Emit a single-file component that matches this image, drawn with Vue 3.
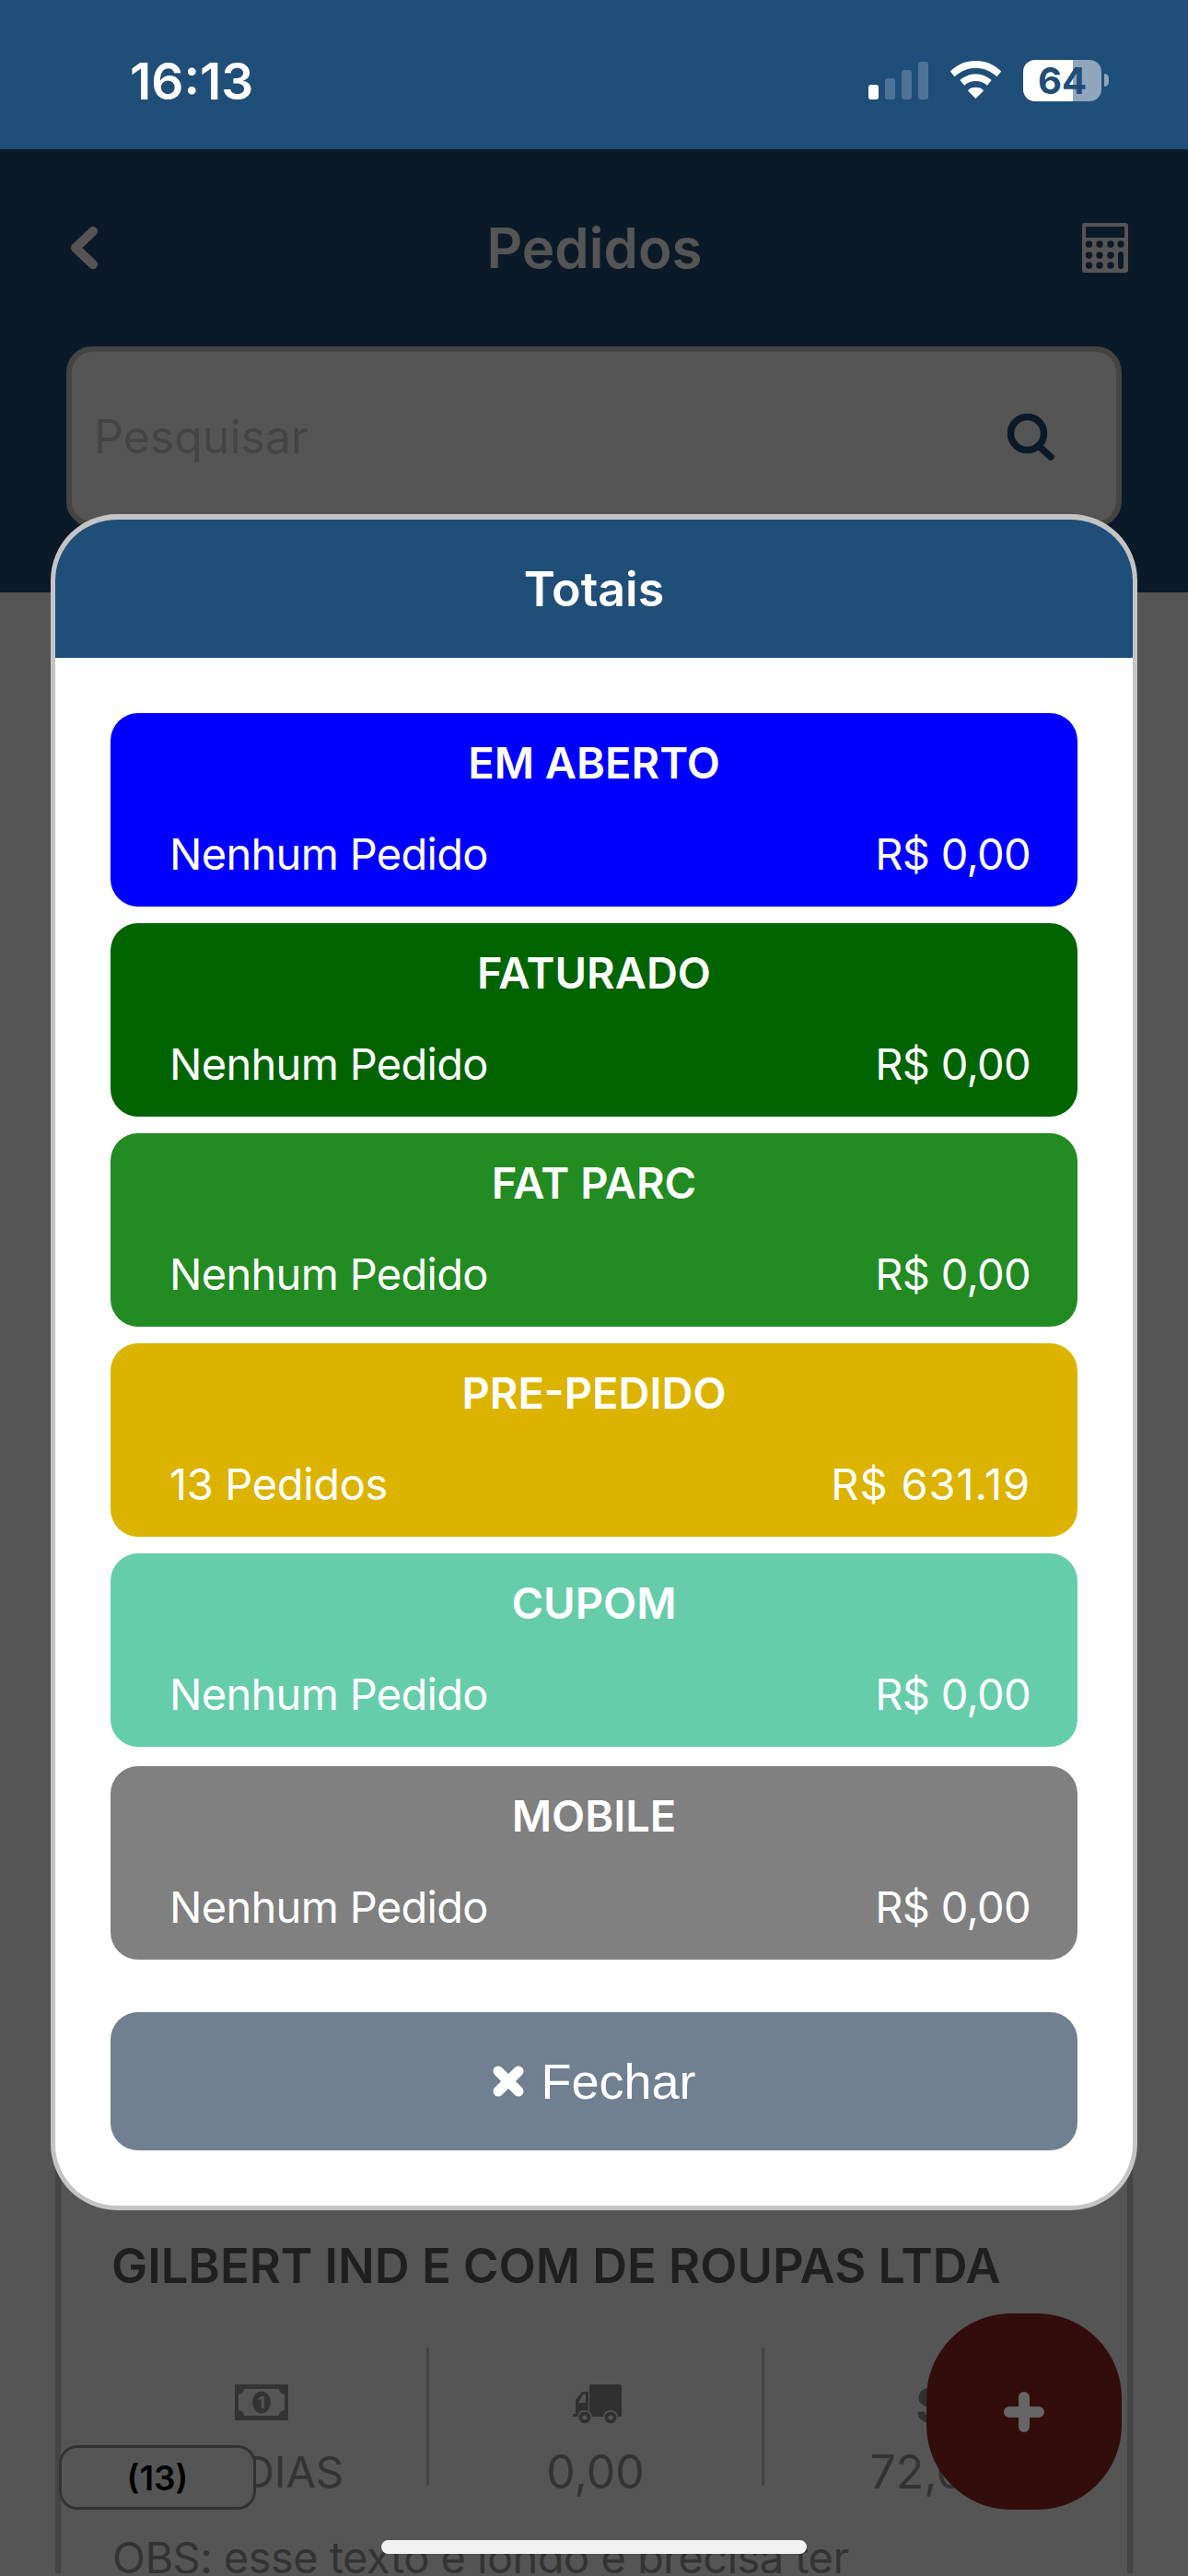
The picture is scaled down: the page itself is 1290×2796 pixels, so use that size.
<template>
  <div class="phone">
    <div class="statusbar">
      <span class="clock">16:13</span>
      <div class="status-icons">
        <div class="signal">
          <i class="bar bar--on"></i>
          <i class="bar bar--2"></i>
          <i class="bar bar--3"></i>
          <i class="bar bar--4"></i>
        </div>
        <svg class="wifi" viewBox="0 0 58 44" width="57" height="42">
          <path fill="#fff" d="M29 0C18 0 8 4 0 12l5 6c6-6 15-10 24-10s18 4 24 10l5-6C50 4 40 0 29 0z" />
          <path fill="#fff" d="M29 15c-7 0-13 3-18 7l5 6c3-3 8-5 13-5s10 2 13 5l5-6c-5-4-11-7-18-7z" />
          <path fill="#fff" d="M29 30c-4 0-7 1-9 4l9 9 9-9c-2-3-5-4-9-4z" />
        </svg>
        <div class="battery">
          <div class="battery__body">
            <span class="battery__level">64</span>
          </div>
          <i class="battery__tip"></i>
        </div>
      </div>
    </div>

    <div class="page">
      <header class="topbar">
        <div class="topbar__row">
          <svg class="back" viewBox="0 0 31 48" width="31" height="48">
            <path d="M25 6 6 24l19 18" fill="none" stroke="#fff" stroke-width="10" stroke-linecap="round" stroke-linejoin="round" />
          </svg>
          <h1 class="topbar__title">Pedidos</h1>
          <svg class="calc" viewBox="0 0 50 54" width="50" height="54">
            <path fill="#fff" fill-rule="evenodd" d="M3 0h44a3 3 0 0 1 3 3v48a3 3 0 0 1-3 3H3a3 3 0 0 1-3-3V3a3 3 0 0 1 3-3zM5 4a1 1 0 0 0-1 1v10a1 1 0 0 0 1 1h40a1 1 0 0 0 1-1V5a1 1 0 0 0-1-1zM42 31a3 3 0 0 0-3 3v13a3 3 0 0 0 6 0V34a3 3 0 0 0-3-3z" />
            <g fill="#1f4e79">
              <circle cx="7.500" cy="23" r="3.700" />
              <circle cx="19" cy="23" r="3.700" />
              <circle cx="31" cy="23" r="3.700" />
              <circle cx="42" cy="23" r="3.700" />
              <circle cx="7.500" cy="35" r="3.700" />
              <circle cx="19" cy="35" r="3.700" />
              <circle cx="31" cy="35" r="3.700" />
              <circle cx="7.500" cy="46" r="3.700" />
              <circle cx="19" cy="46" r="3.700" />
              <circle cx="31" cy="46" r="3.700" />
            </g>
          </svg>
        </div>
        <div class="search">
          <span class="search__placeholder">Pesquisar</span>
          <svg class="search__icon" viewBox="0 0 51 51" width="51" height="51">
            <circle cx="21.500" cy="21.500" r="18" fill="none" stroke="#1f4e79" stroke-width="7.500" />
            <path d="M35 36 47 47" stroke="#1f4e79" stroke-width="7.500" stroke-linecap="round" />
          </svg>
        </div>
      </header>

      <div class="list">
        <div class="order">
          <h2 class="order__name">GILBERT IND E COM DE ROUPAS LTDA</h2>
          <div class="order__stats">
            <div class="stat">
              <svg class="stat__icon stat__icon--bill" viewBox="0 0 58 39" width="58" height="39">
                <rect width="58" height="39" rx="1" fill="#999" />
                <rect x="4" y="5" width="50" height="29" fill="#fff" />
                <g fill="#999">
                  <circle cx="4" cy="5" r="6" />
                  <circle cx="54" cy="5" r="6" />
                  <circle cx="4" cy="34" r="6" />
                  <circle cx="54" cy="34" r="6" />
                  <ellipse cx="29" cy="19.500" rx="10" ry="12" />
                </g>
                <text x="29" y="26" text-anchor="middle" class="stat__bill">1</text>
              </svg>
              <span class="stat__value">30 DIAS</span>
            </div>
            <div class="stat">
              <svg class="stat__icon stat__icon--truck" viewBox="0 0 53 44" width="53" height="44">
                <rect x="18" width="35" height="35" rx="2" fill="#8f8f8f" />
                <path fill="#8f8f8f" fill-rule="evenodd" d="M17 8h-7L3 17v15H0v3h17zM14 11v9H6l5-9z" />
                <g>
                  <circle cx="13" cy="36" r="8" fill="#fff" />
                  <circle cx="13" cy="36" r="6.500" fill="#8f8f8f" />
                  <circle cx="13" cy="36" r="2.500" fill="#fff" />
                  <circle cx="41" cy="36" r="8" fill="#fff" />
                  <circle cx="41" cy="36" r="6.500" fill="#8f8f8f" />
                  <circle cx="41" cy="36" r="2.500" fill="#fff" />
                </g>
              </svg>
              <span class="stat__value stat__value--num">0,00</span>
            </div>
            <div class="stat">
              <span class="stat__icon stat__sign">$</span>
              <span class="stat__value stat__value--num">72,00</span>
            </div>
          </div>
          <p class="order__note">OBS: esse texto é longo e precisa ter</p>
        </div>
      </div>

      <div class="count">(13)</div>

      <div class="backdrop"></div>

      <button class="fab" type="button">
        <svg viewBox="0 0 44 44" width="44" height="44">
          <path d="M22 6v32M6 22h32" stroke="#666" stroke-width="12" stroke-linecap="round" fill="none" />
        </svg>
      </button>

      <div class="modal">
        <div class="modal__head">Totais</div>
        <div class="modal__body">
          <div class="totals">
            <div v-for="t in totals" :key="t.name" class="total" :class="t.cls">
              <div class="total__name">{{ t.name }}</div>
              <div class="total__row">
                <span>{{ t.count }}</span>
                <span>{{ t.value }}</span>
              </div>
            </div>
          </div>
          <button class="close" type="button">
            <svg viewBox="0 0 36 36" width="36" height="36">
              <path d="M7 7l22 22M29 7 7 29" stroke="#fff" stroke-width="11" stroke-linecap="round" />
            </svg>
            Fechar
          </button>
        </div>
      </div>

      <div class="home-bar"></div>
    </div>
  </div>
</template>

<script setup>
const totals = [
  { name: 'EM ABERTO', count: 'Nenhum Pedido', value: 'R$ 0,00', cls: 'total--blue' },
  { name: 'FATURADO', count: 'Nenhum Pedido', value: 'R$ 0,00', cls: 'total--dark' },
  { name: 'FAT PARC', count: 'Nenhum Pedido', value: 'R$ 0,00', cls: 'total--green' },
  { name: 'PRE-PEDIDO', count: '13 Pedidos', value: 'R$ 631.19', cls: 'total--yellow' },
  { name: 'CUPOM', count: 'Nenhum Pedido', value: 'R$ 0,00', cls: 'total--mint' },
  { name: 'MOBILE', count: 'Nenhum Pedido', value: 'R$ 0,00', cls: 'total--gray' }
];
</script>

<style>
html,
body {
  margin: 0;
  background: #fff;
}
</style>

<style scoped>
.phone {
  width: 1290px;
  height: 2796px;
  overflow: hidden;
  display: flex;
  flex-direction: column;
  font-family: Inter, "Liberation Sans", sans-serif;
  background: #fff;
}

.statusbar {
  height: 162px;
  flex: none;
  background: #1f4e79;
  color: #fff;
  display: flex;
  align-items: center;
  justify-content: space-between;
  padding: 12px 86px 0 141px;
  box-sizing: border-box;
}

.clock {
  font-size: 55px;
  font-weight: 600;
  line-height: 62px;
  margin-top: 2px;
}

.status-icons {
  display: flex;
  align-items: center;
}

.signal {
  display: flex;
  align-items: flex-end;
  gap: 7px;
  height: 41px;
  margin-right: 23px;
}

.bar {
  width: 11px;
  height: 16px;
  border-radius: 3px;
  background: #4f7397;
}

.bar--on {
  background: #fff;
}

.bar--2 {
  height: 23px;
}

.bar--3 {
  height: 32px;
}

.bar--4 {
  height: 41px;
}

.wifi {
  margin-right: 23px;
}

.battery {
  display: flex;
  align-items: center;
  gap: 3px;
}

.battery__body {
  width: 85px;
  height: 45px;
  border-radius: 13px;
  background: linear-gradient(90deg, #fff 63.500%, #8fa6bc 63.500%);
  display: flex;
  align-items: center;
  justify-content: center;
}

.battery__level {
  font-size: 40px;
  line-height: 45px;
  font-weight: 700;
  color: #1f4e79;
}

.battery__tip {
  width: 5px;
  height: 14px;
  border-radius: 0 5px 5px 0;
  background: #8fa6bc;
}

.page {
  position: relative;
  flex: 1;
  min-height: 0;
}

.topbar {
  height: 481px;
  background: #1f4e79;
}

.topbar__row {
  height: 214px;
  box-sizing: border-box;
  padding: 0 65px 0 76px;
  display: grid;
  grid-template-columns: 1fr auto 1fr;
  align-items: center;
}

.calc {
  justify-self: end;
}

.topbar__title {
  margin: 0 10px 0 0;
  font-size: 60px;
  line-height: 70px;
  font-weight: 600;
  color: #fff;
}

.search {
  height: 196px;
  margin: 0 72px;
  box-sizing: border-box;
  border: 6px solid #ccc;
  border-radius: 28px;
  background: #fff;
  display: flex;
  align-items: center;
  justify-content: space-between;
  padding: 0 67px 0 24px;
}

.search__placeholder {
  font-size: 50px;
  color: #ccc;
}

.list {
  height: 2150px;
  overflow: hidden;
  padding: 0 60px;
}

.order {
  height: 2200px;
  box-sizing: border-box;
  border: solid #ccc;
  border-width: 0 6px;
  padding: 1785px 56px 0;
}

.order__name {
  margin: 0 0 0 -1px;
  font-size: 52.400px;
  line-height: 62px;
  font-weight: 600;
  color: #5e5e5e;
  white-space: nowrap;
}

.order__stats {
  display: grid;
  grid-template-columns: repeat(3, 364px);
  margin: 58px 0 0 -20px;
  height: 150px;
}

.stat {
  display: flex;
  flex-direction: column;
  align-items: center;
  padding-top: 40px;
  box-sizing: border-box;
  height: 150px;
  border-right: 3px solid #ccc;
}

.stat:last-child {
  border-right: 0;
}

.stat__icon {
  height: 45px;
  flex: none;
}

.stat__icon--bill {
  height: 39px;
  margin: 0 0 6px 2px;
}

.stat__icon--truck {
  height: 44px;
  margin: 0 0 1px 3px;
}

.stat__bill {
  font-size: 18px;
  font-weight: 700;
  fill: #fff;
}

.stat__sign {
  font-size: 54px;
  line-height: 45px;
  font-weight: 700;
  color: #8f8f8f;
}

.stat__value {
  margin-top: 22px;
  font-size: 47px;
  line-height: 56px;
  color: #999;
  white-space: nowrap;
}

.stat__value--num {
  font-size: 50px;
}

.order__note {
  margin: 48px 0 0;
  font-size: 47px;
  line-height: 60px;
  letter-spacing: -0.550px;
  color: #999;
  white-space: nowrap;
}

.count {
  position: absolute;
  left: 64px;
  top: 2492px;
  width: 214px;
  height: 70px;
  box-sizing: border-box;
  border: 3px solid #999;
  border-radius: 20px;
  padding-top: 1px;
  background: #fff;
  color: #000;
  font-size: 37px;
  font-weight: 600;
  display: flex;
  align-items: center;
  justify-content: center;
}

.backdrop {
  position: absolute;
  inset: 0;
  background: rgba(0, 0, 0, 0.667);
}

.fab {
  position: absolute;
  left: 1006px;
  top: 2349px;
  width: 212px;
  height: 213px;
  padding: 0;
  border: 0;
  border-radius: 92px;
  background: #330c0c;
  display: flex;
  align-items: center;
  justify-content: center;
}

.modal {
  position: absolute;
  left: 55px;
  top: 396px;
  width: 1180px;
  box-sizing: border-box;
  border: solid #c4c4c4;
  border-width: 6px 5px 5px;
  border-radius: 72px;
  overflow: hidden;
  background: #fff;
}

.modal__head {
  height: 150px;
  background: #1f4e79;
  color: #fff;
  font-size: 52px;
  font-weight: 600;
  display: flex;
  align-items: center;
  justify-content: center;
}

.modal__body {
  padding: 60px;
}

.totals {
  display: flex;
  flex-direction: column;
  gap: 18px;
}

.total {
  height: 210px;
  box-sizing: border-box;
  border-radius: 30px;
  color: #fff;
  padding: 26px 51px 0 64px;
}

.total:last-child {
  margin-top: 3px;
}

.total--blue {
  background: #0000ff;
}

.total--dark {
  background: #006400;
}

.total--green {
  background: #228b22;
}

.total--yellow {
  background: #dcb400;
}

.total--mint {
  background: #66cdaa;
}

.total--gray {
  background: #808080;
}

.total__name {
  font-size: 47px;
  line-height: 56px;
  font-weight: 600;
  text-align: center;
  margin-left: -13px;
}

.total__row {
  display: flex;
  justify-content: space-between;
  margin-top: 43px;
  font-size: 47px;
  line-height: 56px;
  letter-spacing: -0.700px;
}

.total--yellow .total__row {
  letter-spacing: -0.350px;
}

.total--yellow .total__row span:last-child {
  letter-spacing: 0.900px;
}

.close {
  width: 100%;
  height: 150px;
  margin-top: 57px;
  border: 0;
  border-radius: 30px;
  background: #708090;
  color: #fff;
  font-family: "Liberation Sans", Arial, sans-serif;
  font-size: 54px;
  display: flex;
  align-items: center;
  justify-content: center;
  gap: 17px;
}

.home-bar {
  position: absolute;
  left: 414px;
  top: 2595px;
  width: 462px;
  height: 15px;
  border-radius: 8px;
  background: #f0f0f0;
}
</style>
